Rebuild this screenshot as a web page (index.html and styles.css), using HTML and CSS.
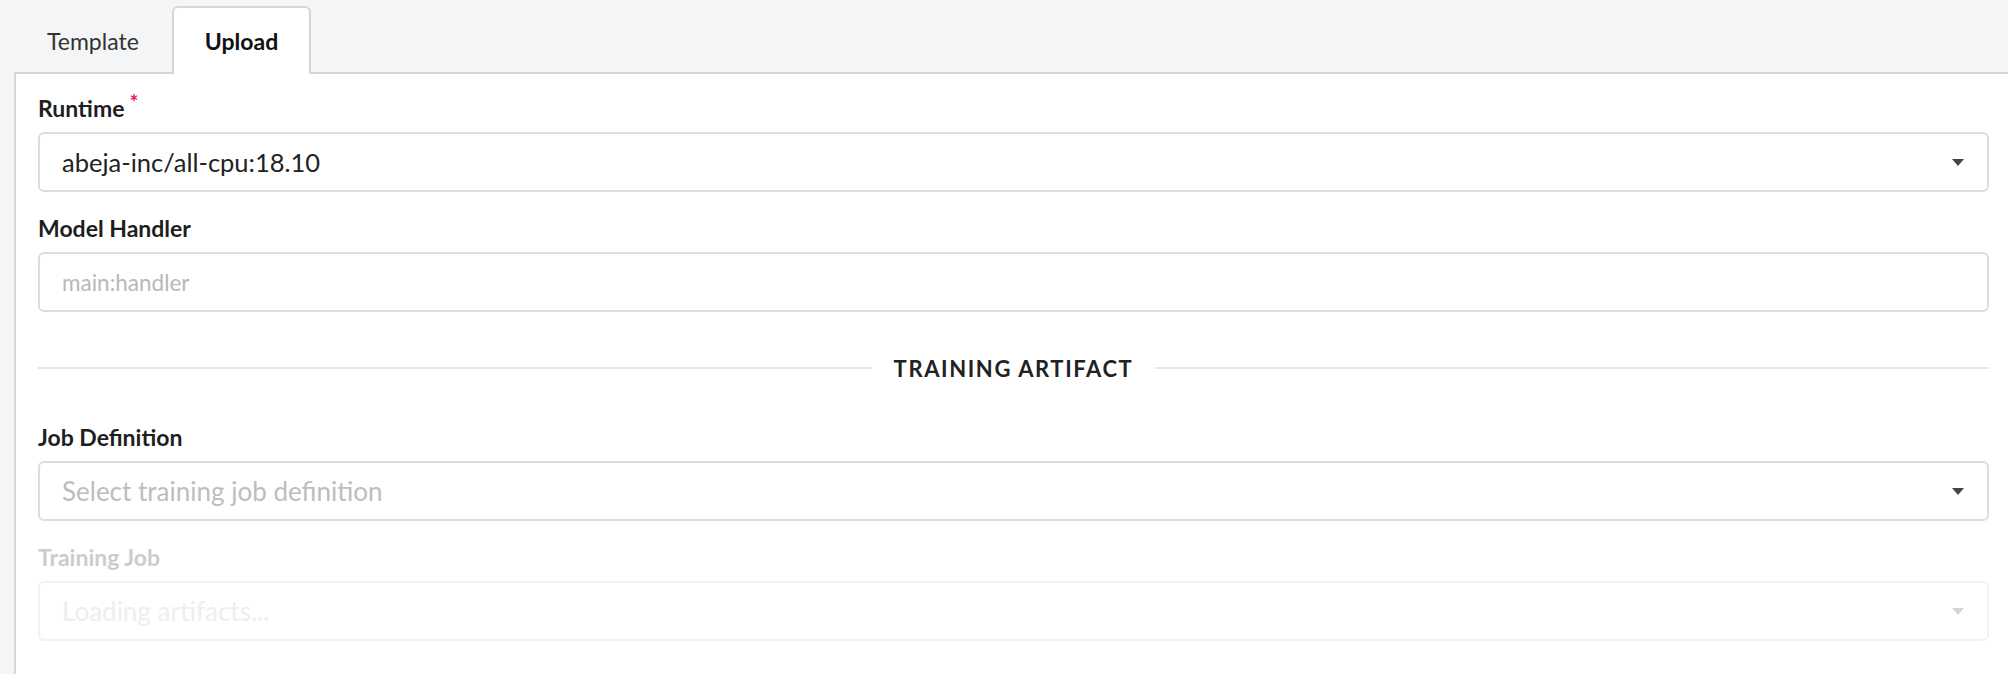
FILE: index.html
```html
<!DOCTYPE html>
<html lang="en">
<head>
<meta charset="utf-8">
<title>Upload</title>
<link rel="stylesheet" href="styles.css">
</head>
<body>
<div class="tabs">
  <div class="tab">Template</div>
  <div class="tab active">Upload</div>
</div>
<div class="panel">
  <div class="field">
    <label class="label">Runtime<span class="req">*</span></label>
    <div class="control select">
      <span class="value">abeja-inc/all-cpu:18.10</span>
      <span class="caret"></span>
    </div>
  </div>
  <div class="field">
    <label class="label">Model Handler</label>
    <div class="control">
      <span class="placeholder small">main:handler</span>
    </div>
  </div>
  <div class="divider"><span class="divider-text">TRAINING ARTIFACT</span></div>
  <div class="field">
    <label class="label">Job Definition</label>
    <div class="control select">
      <span class="placeholder">Select training job definition</span>
      <span class="caret"></span>
    </div>
  </div>
  <div class="field disabled">
    <label class="label">Training Job</label>
    <div class="control select">
      <span class="placeholder">Loading artifacts...</span>
      <span class="caret"></span>
    </div>
  </div>
</div>
</body>
</html>
```

FILE: styles.css
```css
* { box-sizing: border-box; }
html, body { margin: 0; padding: 0; }
body {
  background: #f4f5f7;
  font-family: Lato, "Open Sans", sans-serif;
  color: #222;
  overflow: hidden;
  height: 674px;
}
.tabs {
  display: flex;
  padding: 6px 0 0 14px;
  height: 74px;
  position: relative;
  z-index: 1;
}
.tab {
  padding: 0 31px;
  height: 68px;
  display: flex;
  align-items: center;
  font-size: 23px;
  color: #333;
  border: 2px solid transparent;
  border-bottom: none;
  border-radius: 6px 6px 0 0;
}
.tab.active {
  background: #fff;
  border-color: #d6d6d6;
  font-weight: 700;
  color: #111;
}
.panel {
  margin-top: -2px;
  margin-left: 14px;
  background: #fff;
  border-top: 2px solid #d6d6d6;
  border-left: 2px solid #d6d6d6;
  padding: 20px 19px 40px 22px;
  min-height: 700px;
}
.field { display: flex; flex-direction: column; }
.label {
  font-size: 23px;
  font-weight: 700;
  line-height: 28px;
  margin-bottom: 10px;
  color: #1e1e1e;
}
.req {
  color: #d6245c;
  font-size: 21px;
  vertical-align: top;
  margin-left: 5px;
  line-height: 16px;
}
.control {
  height: 60px;
  border: 2px solid #dddddd;
  border-radius: 6px;
  display: flex;
  align-items: center;
  padding: 0 22px;
  margin-bottom: 22px;
}
.value { font-size: 25.5px; color: #222; flex: 1; }
.placeholder { font-size: 26px; color: #bdbdbd; flex: 1; }
.placeholder.small { font-size: 22.5px; color: #b8b8b8; }
.caret {
  width: 0; height: 0;
  border-left: 6px solid transparent;
  border-right: 6px solid transparent;
  border-top: 7px solid #444;
  margin-right: 1px;
}
.divider {
  display: flex;
  align-items: center;
  gap: 22px;
  height: 28px;
  margin: 20px 0 41px;
}
.divider::before, .divider::after {
  content: "";
  flex: 1;
  height: 2px;
  background: #e6e6e6;
}
.divider-text {
  font-size: 22px;
  font-weight: 700;
  letter-spacing: 1.6px;
  color: #222;
}
.field.disabled .label { color: #cccccc; }
.field.disabled .control { border-color: #f2f2f2; }
.field.disabled .placeholder { color: #eeeeee; }
.field.disabled .caret { border-top-color: #d4d4d4; }
```
